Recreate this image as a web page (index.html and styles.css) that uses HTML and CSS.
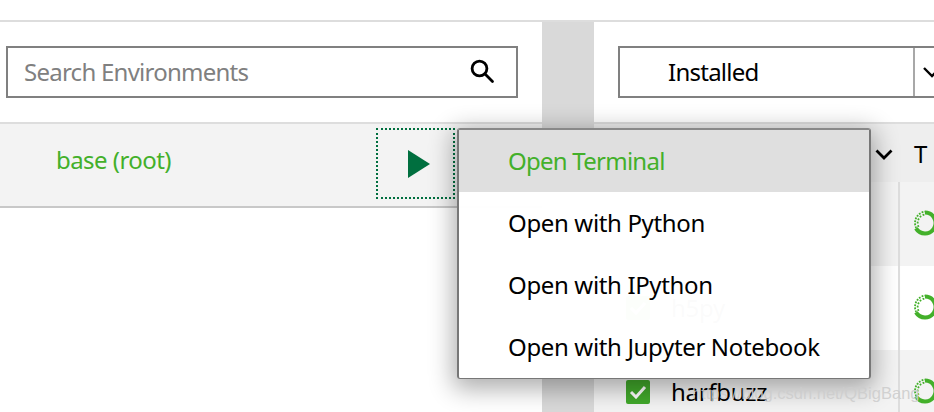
FILE: index.html
```html
<!DOCTYPE html>
<html lang="en">
<head>
<meta charset="utf-8">
<title>Environments</title>
<link rel="stylesheet" href="styles.css">
</head>
<body>
<div class="topbar"></div>
<main class="main">
  <section class="envs">
    <div class="search-wrap">
      <div class="search">
        <span class="placeholder">Search Environments</span>
        <svg class="search-icon" width="26" height="26" viewBox="0 0 26 26" fill="none" stroke="#000" stroke-width="2.8"><circle cx="10.5" cy="10.5" r="7.4"/><path d="M15.8 15.8 23.5 23.5" stroke-linecap="round"/></svg>
      </div>
    </div>
    <div class="env-row">
      <span class="env-name">base (root)</span>
      <button class="play" type="button" aria-label="Run">
        <svg width="22" height="28" viewBox="0 0 22 28"><path d="M0 0 22 14 0 28Z" fill="#006f3f"/></svg>
      </button>
    </div>
  </section>
  <div class="gutter"></div>
  <section class="packages">
    <div class="filter-wrap">
      <div class="filter">
        <span class="filter-label">Installed</span>
        <span class="filter-arrow">
          <svg width="20" height="12" viewBox="0 0 20 12" fill="none" stroke="#000" stroke-width="2.4"><path d="M2 2 10 10 18 2"/></svg>
        </span>
      </div>
    </div>
    <div class="table-head">
      <div class="head-name">
        <span>Name</span>
        <svg width="18" height="11" viewBox="0 0 18 11" fill="none" stroke="#000" stroke-width="2.8"><path d="M1.5 1.5 9 9 16.5 1.5"/></svg>
      </div>
      <div class="head-type">T</div>
    </div>
    <div class="pkg pkg-alt">
      <div class="pkg-main"></div>
      <div class="pkg-type"><svg class="ring" width="26" height="26" viewBox="0 0 26 26" fill="none" stroke="#43b02a"><path d="M13 2.5A10.5 10.5 0 1 1 4 18.4" stroke-width="4"/><path d="M4.2 18A11.4 11.4 0 0 1 13 1.6" stroke-width="1.8" stroke-dasharray="1.8 1.2"/><path d="M6.6 16.8A8.6 8.6 0 0 1 13 4.4" stroke-width="1.8" stroke-dasharray="1.8 1.6"/></svg></div>
    </div>
    <div class="pkg">
      <div class="pkg-main">
        <span class="check"><svg width="18" height="14" viewBox="0 0 18 14" fill="none" stroke="#fff" stroke-width="3"><path d="M2 7 7 12 16 2"/></svg></span>
        <span class="pkg-name">h5py</span>
      </div>
      <div class="pkg-type"><svg class="ring" width="26" height="26" viewBox="0 0 26 26" fill="none" stroke="#43b02a"><path d="M13 2.5A10.5 10.5 0 1 1 4 18.4" stroke-width="4"/><path d="M4.2 18A11.4 11.4 0 0 1 13 1.6" stroke-width="1.8" stroke-dasharray="1.8 1.2"/><path d="M6.6 16.8A8.6 8.6 0 0 1 13 4.4" stroke-width="1.8" stroke-dasharray="1.8 1.6"/></svg></div>
    </div>
    <div class="pkg pkg-alt">
      <div class="pkg-main">
        <span class="check"><svg width="18" height="14" viewBox="0 0 18 14" fill="none" stroke="#fff" stroke-width="3"><path d="M2 7 7 12 16 2"/></svg></span>
        <span class="pkg-name">harfbuzz</span>
      </div>
      <div class="pkg-type"><svg class="ring" width="26" height="26" viewBox="0 0 26 26" fill="none" stroke="#43b02a"><path d="M13 2.5A10.5 10.5 0 1 1 4 18.4" stroke-width="4"/><path d="M4.2 18A11.4 11.4 0 0 1 13 1.6" stroke-width="1.8" stroke-dasharray="1.8 1.2"/><path d="M6.6 16.8A8.6 8.6 0 0 1 13 4.4" stroke-width="1.8" stroke-dasharray="1.8 1.6"/></svg></div>
    </div>
  </section>
</main>
<ul class="menu">
  <li class="menu-item menu-active">Open Terminal</li>
  <li class="menu-item">Open with Python</li>
  <li class="menu-item">Open with IPython</li>
  <li class="menu-item">Open with Jupyter Notebook</li>
</ul>
<div class="watermark">https://blog.csdn.net/QBigBang</div>
</body>
</html>
```
FILE: styles.css
```css
* { box-sizing: border-box; }
html, body { margin: 0; height: 412px; overflow: hidden; background: #fff; }
body { position: relative; font-family: "Noto Sans", "Open Sans", sans-serif; font-size: 24px; color: #000; }
.topbar { height: 22px; border-bottom: 2px solid #ddd; }
.main { display: flex; height: 390px; }
.envs { width: 542px; flex: none; }
.search-wrap { padding: 24px 24px 24px 6px; }
.search { height: 52px; border: 2px solid #808080; display: flex; align-items: center; justify-content: space-between; padding: 0 21px 0 16px; }
.placeholder { color: #808080; letter-spacing: -.75px; margin-bottom: 2px; }
.search-icon { margin-top: -3px; }
.env-row { height: 86px; background: #f3f3f3; border-top: 2px solid #ddd; border-bottom: 2px solid #c8c8c8; display: flex; align-items: flex-start; justify-content: space-between; padding: 4px 87px 0 56px; }
.env-name { color: #43b02a; margin-top: 15px; letter-spacing: -.55px; }
.play { width: 79px; height: 71px; border: 2px dotted #006f3f; background: none; padding: 0 0 0 6px; display: flex; align-items: center; justify-content: center; }
.gutter { width: 52px; flex: none; background: #d9d9d9; }
.packages { flex: 1; min-width: 0; overflow: hidden; }
.filter-wrap { padding: 24px 0 24px 24px; }
.filter { width: 340px; height: 52px; border: 2px solid #808080; display: flex; align-items: center; }
.filter-label { width: 293px; padding-left: 48px; letter-spacing: -.75px; margin-bottom: 2px; }
.filter-arrow { height: 100%; border-left: 2px solid #a8a8a8; padding-left: 7px; display: flex; align-items: center; }
.table-head { height: 60px; background: #eee; border-top: 2px solid #ddd; display: flex; }
.head-name { width: 304px; flex: none; display: flex; align-items: center; justify-content: space-between; padding: 2px 5px 0 81px; color: #888; }
.head-type { padding: 13px 0 0 16px; }
.pkg { height: 84px; display: flex; }
.pkg-alt { background: #f3f3f3; }
.pkg-main { width: 304px; flex: none; display: flex; align-items: center; gap: 21px; padding-left: 32px; }
.pkg-name { letter-spacing: -.3px; margin-bottom: 2px; }
.pkg-type { flex: 1; border-left: 2px solid #ddd; padding: 28px 0 0 12px; }
.ring { display: block; }
.check { width: 24px; height: 24px; background: #41a82b; border-radius: 2px; display: flex; align-items: center; justify-content: center; }
.menu { position: absolute; left: 457px; top: 128px; width: 414px; height: 251px; margin: 0; padding: 0; list-style: none; background: rgba(255,255,255,.985); border: 2px solid #777; border-top-color: #888; border-bottom-width: 1px; border-radius: 3px; box-shadow: 0 6px 24px 4px rgba(0,0,0,.32); }
.menu-item { height: 62px; display: flex; align-items: center; padding: 0 0 2px 49px; letter-spacing: -.35px; }
.menu-active { background: rgba(222,222,222,.985); color: #43b02a; letter-spacing: -.75px; }
.watermark { position: absolute; left: 692px; top: 384px; font-family: "Liberation Sans", Arial, sans-serif; font-size: 16.5px; color: rgba(205,205,205,.9); white-space: nowrap; }
```
